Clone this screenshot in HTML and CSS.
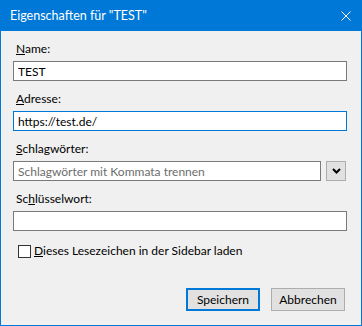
FILE: index.html
```html
<!DOCTYPE html>
<html lang="de">
<head>
  <meta charset="UTF-8">
  <title>Eigenschaften für "TEST"</title>
  <link rel="stylesheet" href="styles.css">
</head>
<body>

  <div class="window">
    <!-- Title bar -->
    <div class="titlebar">
      <span class="title">Eigenschaften für "TEST"</span>
      <svg class="close" width="10" height="10" viewBox="0 0 10 10">
        <path d="M0.5 0.5 L9.5 9.5 M9.5 0.5 L0.5 9.5" stroke="#fff" stroke-width="1" fill="none"/>
      </svg>
    </div>

    <div class="content">
      <div class="field">
        <label class="label"><u>N</u>ame:</label>
        <input class="textbox" type="text" value="TEST">
      </div>

      <div class="field">
        <label class="label"><u>A</u>dresse:</label>
        <input class="textbox focused" type="text" value="https://test.de/">
      </div>

      <div class="field">
        <label class="label"><u>S</u>chlagwörter:</label>
        <div class="tag-row">
          <input class="textbox" type="text" placeholder="Schlagwörter mit Kommata trennen">
          <div class="dropdown">
            <svg width="9" height="6" viewBox="0 0 9 6">
              <polyline points="1,1 4.5,4.5 8,1" stroke="#000" stroke-width="2" fill="none"/>
            </svg>
          </div>
        </div>
      </div>

      <div class="field">
        <label class="label">Sc<u>h</u>lüsselwort:</label>
        <input class="textbox" type="text">
      </div>

      <div class="check-row">
        <span class="checkbox"></span>
        <span><u>D</u>ieses Lesezeichen in der Sidebar laden</span>
      </div>

      <div class="buttons">
        <button class="btn default">Speichern</button>
        <button class="btn">Abbrechen</button>
      </div>
    </div>
  </div>

</body>
</html>
```

FILE: styles.css
```css
body {
  margin: 0;
  font-family: Lato, "Noto Sans", sans-serif;
  font-size: 12px;
  color: #000;
}
.window {
  width: 362px;
  height: 326px;
  box-sizing: border-box;
  border: 1px solid #0078d7;
  background: #f0f0f0;
  display: flex;
  flex-direction: column;
}
.titlebar {
  height: 30px;
  background: #0078d7;
  color: #fff;
  display: flex;
  align-items: center;
  justify-content: space-between;
  padding: 0 10px 0 9px;
  flex-shrink: 0;
}
.title {
  line-height: 16px;
  font-size: 12.5px;
}
.content {
  flex: 1;
  display: flex;
  flex-direction: column;
  padding: 10px 14px 14px 12px;
}
.field {
  display: flex;
  flex-direction: column;
  margin-bottom: 10px;
}
.label {
  line-height: 16px;
  padding-left: 3px;
  margin-bottom: 4px;
}
.textbox {
  box-sizing: border-box;
  height: 20px;
  width: 100%;
  margin: 0;
  border: 1px solid #7a7a7a;
  background: #fff;
  padding: 0 4px;
  font-family: inherit;
  font-size: 12px;
  color: #000;
  outline: none;
}
.textbox::placeholder {
  color: #6d6d6d;
}
.focused {
  border-color: #0078d7;
}
.tag-row {
  display: flex;
  align-items: center;
}
.tag-row .textbox {
  width: 308px;
}
.dropdown {
  box-sizing: border-box;
  width: 20px;
  height: 20px;
  margin-left: 5px;
  border: 1px solid #adadad;
  background: #e1e1e1;
  display: flex;
  align-items: center;
  justify-content: center;
}
.check-row {
  display: flex;
  align-items: center;
  line-height: 16px;
  margin-top: 2px;
  padding-left: 5px;
}
.checkbox {
  box-sizing: border-box;
  width: 13px;
  height: 13px;
  border: 1px solid #333;
  background: #fff;
  margin-right: 3px;
}
.buttons {
  margin-top: auto;
  display: flex;
  justify-content: flex-end;
  gap: 11px;
  padding-right: 2px;
}
.btn {
  box-sizing: border-box;
  width: 74px;
  height: 23px;
  border: 1px solid #adadad;
  background: #e1e1e1;
  font-family: inherit;
  font-size: 12px;
  color: #000;
  padding: 0;
}
.btn.default {
  border: 2px solid #0078d7;
}
```
